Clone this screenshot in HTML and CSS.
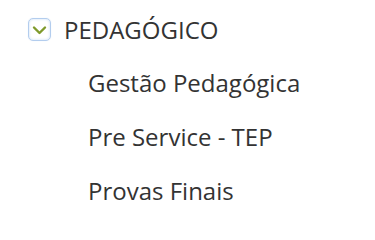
FILE: index.html
```html
<!DOCTYPE html>
<html lang="pt">
<head>
<meta charset="utf-8">
<link rel="stylesheet" href="styles.css">
</head>
<body>
<div class="tree">
  <div class="node">
    <span class="toggle">
      <svg viewBox="0 0 23 23" width="23" height="23"><path d="M6 9.5 L11.5 15 L17 9.5" fill="none" stroke="#7f9a2b" stroke-width="2.4" stroke-linecap="round" stroke-linejoin="round"/></svg>
    </span>
    <span class="label">PEDAGÓGICO</span>
  </div>
  <ul class="children">
    <li>Gestão Pedagógica</li>
    <li>Pre Service - TEP</li>
    <li>Provas Finais</li>
  </ul>
</div>
</body>
</html>
```
FILE: styles.css
```css
html, body { margin: 0; padding: 0; background: #fff; }
body { font-family: "Open Sans", "DejaVu Sans", sans-serif; color: #333; }
.tree { padding: 17px 0 0 28px; }
.node { display: flex; align-items: center; gap: 13px; height: 24px; }
.toggle {
  width: 23px; height: 23px; box-sizing: border-box; flex: none;
  border: 1px solid #b3cdee; border-radius: 5px;
  box-shadow: inset 0 0 3px rgba(120,170,230,0.4), 0 0 1px rgba(120,170,230,0.3);
  display: flex; align-items: center; justify-content: center;
}
.toggle svg { width: 23px; height: 23px; flex: none; }
.label { font-size: 24px; line-height: 24px; padding-top: 2px; }
.children { list-style: none; margin: 15px 0 0; padding: 0 0 0 60px; }
.children li { font-size: 24px; line-height: 54px; }
```
